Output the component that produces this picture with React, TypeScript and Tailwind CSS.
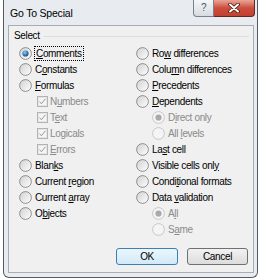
import React from "react";

type Item = {
  label: string;
  key?: number;
  kind?: "radio" | "check";
  sub?: boolean;
  checked?: boolean;
  disabled?: boolean;
  focus?: boolean;
};

const left: Item[] = [
  { label: "Comments", key: 0, checked: true, focus: true },
  { label: "Constants", key: 1 },
  { label: "Formulas", key: 0 },
  { label: "Numbers", key: 1, kind: "check", sub: true, checked: true, disabled: true },
  { label: "Text", key: 1, kind: "check", sub: true, checked: true, disabled: true },
  { label: "Logicals", key: 2, kind: "check", sub: true, checked: true, disabled: true },
  { label: "Errors", key: 0, kind: "check", sub: true, checked: true, disabled: true },
  { label: "Blanks", key: 4 },
  { label: "Current region", key: 8 },
  { label: "Current array", key: 8 },
  { label: "Objects", key: 1 },
];

const right: Item[] = [
  { label: "Row differences", key: 2 },
  { label: "Column differences", key: 4 },
  { label: "Precedents", key: 0 },
  { label: "Dependents", key: 0 },
  { label: "Direct only", key: 1, sub: true, checked: true, disabled: true },
  { label: "All levels", key: 4, sub: true, disabled: true },
  { label: "Last cell", key: 2 },
  { label: "Visible cells only", key: 17 },
  { label: "Conditional formats", key: 5 },
  { label: "Data validation", key: 5 },
  { label: "All", key: 1, sub: true, checked: true, disabled: true },
  { label: "Same", key: 1, sub: true, disabled: true },
];

function Radio({ checked, disabled }: { checked?: boolean; disabled?: boolean }) {
  return (
    <svg width="13" height="13" viewBox="0 0 13 13" className="shrink-0">
      <defs>
        <linearGradient id="rg" x1="0" y1="0" x2="1" y2="1">
          <stop offset="0" stopColor="#cfd0d1" />
          <stop offset="1" stopColor="#ffffff" />
        </linearGradient>
        <radialGradient id="rs" cx="0.4" cy="0.35" r="0.7">
          <stop offset="0" stopColor="#8fd0f5" />
          <stop offset="0.6" stopColor="#2f76b4" />
          <stop offset="1" stopColor="#1a4c7c" />
        </radialGradient>
      </defs>
      <circle
        cx="6.5"
        cy="6.5"
        r="5.9"
        fill={disabled ? "#f4f4f4" : "url(#rg)"}
        stroke={disabled ? "#c7c7c7" : "#8e8f8f"}
        strokeWidth="1"
      />
      {checked && (
        <circle cx="6.5" cy="6.5" r="3.1" fill={disabled ? "#a9a9a9" : "url(#rs)"} />
      )}
    </svg>
  );
}

function Check({ checked }: { checked?: boolean }) {
  return (
    <svg width="11" height="11" viewBox="0 0 11 11" className="shrink-0">
      <rect x="0.5" y="0.5" width="10" height="10" fill="#f5f5f5" stroke="#b3b3b3" />
      <rect x="1.5" y="1.5" width="8" height="8" fill="none" stroke="#e6e6e6" />
      {checked && (
        <path d="M2.6 5.6 L4.4 7.8 L8.4 2.8" fill="none" stroke="#9a9a9a" strokeWidth="1" />
      )}
    </svg>
  );
}

function Label({ text, k }: { text: string; k?: number }) {
  if (k === undefined) return <>{text}</>;
  return (
    <>
      {text.slice(0, k)}
      <span className="underline underline-offset-[1px]">{text[k]}</span>
      {text.slice(k + 1)}
    </>
  );
}

function Row({ item, indent }: { item: Item; indent: string }) {
  const isCheck = item.kind === "check";
  return (
    <div className={`flex h-[16px] items-center ${item.sub ? indent : ""}`}>
      {isCheck ? <Check checked={item.checked} /> : <Radio checked={item.checked} disabled={item.disabled} />}
      <span
        className={`leading-[13px] ${isCheck ? "ml-[2px]" : "ml-[3px]"} ${
          item.disabled ? "text-[#8a8a8a]" : "text-black"
        } ${item.focus ? "outline-1 outline-dotted outline-black px-px" : ""}`}
      >
        <Label text={item.label} k={item.key} />
      </span>
    </div>
  );
}

export default function App() {
  return (
    <div className="h-[280px] w-[261px] bg-white font-['Liberation_Sans',Arial,sans-serif] text-[10px] tracking-[-0.35px]">
      <div className="ml-[3px] flex h-[278px] w-[255px] flex-col rounded-b-[6px] border border-t-0 border-[#545a62] bg-[#e8ecf1]">
        {/* title bar */}
        <div className="flex h-[25px] items-start">
          <span className="pl-[6px] pt-[6px] text-[10.5px] tracking-[-0.2px] text-black">Go To Special</span>
          <div className="ml-auto mr-[2px] flex">
            <div className="flex h-[17px] w-[21px] items-center justify-center rounded-bl-[4px] border border-t-0 border-[#7b8088] bg-gradient-to-b from-[#f4f6f8] to-[#d7dbe0] text-[10px] leading-none text-[#4c5560]">
              ?
            </div>
            <div className="flex h-[17px] w-[41px] items-center justify-center rounded-br-[4px] border border-l-0 border-t-0 border-[#5e2a24] bg-gradient-to-b from-[#e9a496] via-[#cc4d3e] to-[#c2402f]">
              <svg width="12" height="10" viewBox="0 0 12 10">
                <path d="M2 1.5 L10 8.5 M10 1.5 L2 8.5" stroke="#4a1610" strokeWidth="3.6" strokeLinecap="round" />
                <path d="M2 1.5 L10 8.5 M10 1.5 L2 8.5" stroke="#ffffff" strokeWidth="2" strokeLinecap="round" />
              </svg>
            </div>
          </div>
        </div>

        {/* client area */}
        <div className="ml-[4px] flex h-[248px] w-[246px] flex-col border border-[#a7adb3] bg-[#f0f0f0]">
          <div className="mt-[4px] flex h-[12px] items-center pl-[5px] pr-[4px]">
            <span className="leading-[12px]">Select</span>
            <div className="ml-[4px] h-px flex-1 bg-[#d5dfe5]" />
          </div>

          <div className="mt-[3px] grid grid-cols-[117px_1fr] pl-[10px]">
            <div className="flex flex-col">
              {left.map((item) => (
                <Row key={item.label} item={item} indent="pl-[18px]" />
              ))}
            </div>
            <div className="flex flex-col">
              {right.map((item) => (
                <Row key={item.label} item={item} indent="pl-[16px]" />
              ))}
            </div>
          </div>

          <div className="mt-auto mb-[7px] flex justify-end gap-[9px] pr-[5px]">
            <button className="flex h-[17px] w-[62px] items-center justify-center rounded-[3px] border border-[#3c7fb1] bg-gradient-to-b from-[#eaf6fd] to-[#d2e9f7] text-black">
              OK
            </button>
            <button className="flex h-[17px] w-[61px] items-center justify-center rounded-[3px] border border-[#707070] bg-gradient-to-b from-[#f2f2f2] to-[#dcdcdc] text-black">
              Cancel
            </button>
          </div>
        </div>
      </div>
    </div>
  );
}
